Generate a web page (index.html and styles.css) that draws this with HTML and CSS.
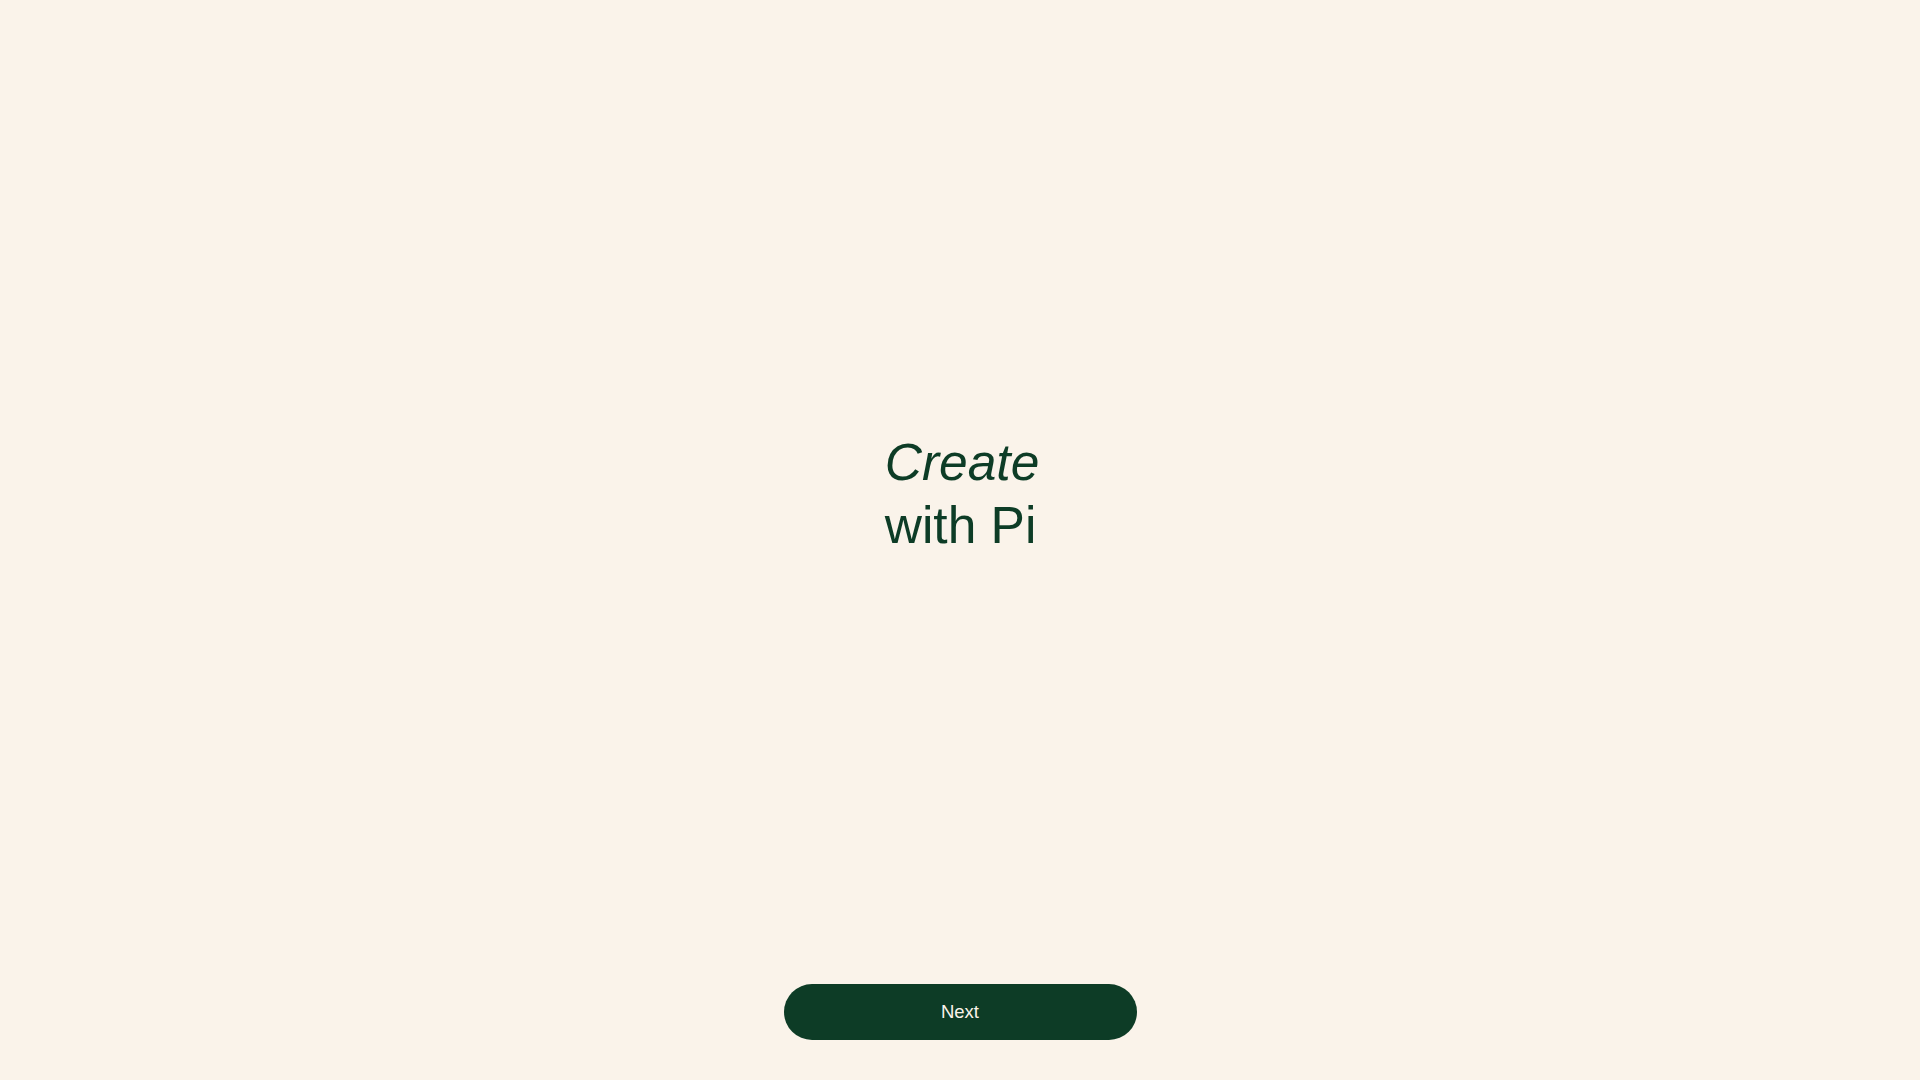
FILE: index.html
```html
<!DOCTYPE html>
<html lang="en">
<head>
<meta charset="utf-8">
<title>Create with Pi</title>
<link rel="stylesheet" href="styles.css">
</head>
<body>
<div class="page">
  <main class="hero">
    <h1 class="title"><em class="title-em">Create</em><span class="title-rest">with Pi</span></h1>
  </main>
  <footer class="actions">
    <button class="next-btn" type="button">Next</button>
  </footer>
</div>
</body>
</html>
```

FILE: styles.css
```css
* { box-sizing: border-box; }
html, body {
  margin: 0;
  padding: 0;
  height: 100%;
}
body {
  background: #faf3ea;
  color: #0d3c26;
  font-family: "Liberation Sans", Arial, sans-serif;
}
.page {
  height: 100vh;
  display: flex;
  flex-direction: column;
}
.hero {
  flex: 1;
  display: flex;
  align-items: center;
  justify-content: center;
  padding-top: 4px;
  padding-left: 4px;
}
.title {
  margin: 0;
  font-weight: 400;
  font-size: 51.5px;
  line-height: 63px;
  text-align: left;
  color: #0d3c26;
}
.title-em {
  display: block;
  font-style: italic;
}
.title-rest {
  display: block;
}
.actions {
  display: flex;
  justify-content: center;
  padding-bottom: 40px;
}
.next-btn {
  width: 353px;
  height: 56px;
  border: none;
  border-radius: 28px;
  background: #0d3c26;
  color: #faf3ea;
  font-family: "Liberation Sans", Arial, sans-serif;
  font-size: 18.5px;
  cursor: pointer;
}
```
